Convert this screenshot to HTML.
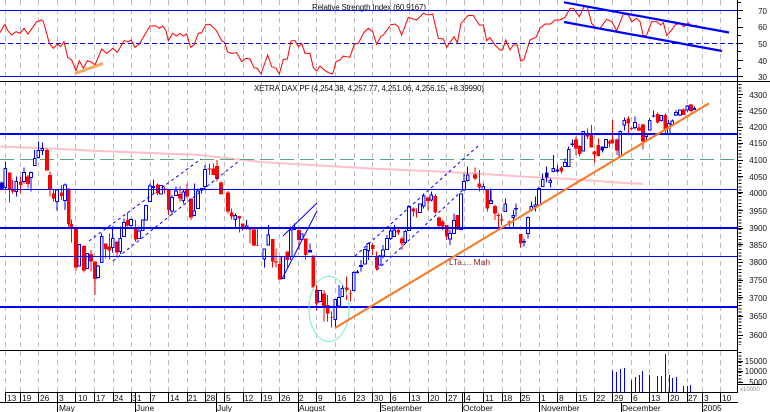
<!DOCTYPE html>
<html>
<head>
<meta charset="utf-8">
<style>
html,body{margin:0;padding:0;background:#fff;width:770px;height:412px;overflow:hidden}
svg{display:block}
text{font-family:"Liberation Sans",sans-serif;font-size:8px;fill:#111}
.a{font-size:8px;text-anchor:end}
.d{font-size:8.4px}
</style>
</head>
<body>
<svg width="770" height="412" viewBox="0 0 770 412" xmlns="http://www.w3.org/2000/svg">
<rect width="770" height="412" fill="#fff"/>
<!-- grid -->
<path fill="none" stroke="#bdbdbd" stroke-width="1" stroke-dasharray="5 4" shape-rendering="crispEdges" d="M5.5 0V392M20.5 0V392M38.5 0V392M57.5 0V392M75.5 0V392M94.5 0V392M113.5 0V392M131.5 0V392M150.5 0V392M168.5 0V392M187.5 0V392M205.5 0V392M224.5 0V392M243.5 0V392M261.5 0V392M279.5 0V392M298.5 0V392M316.5 0V392M335.5 0V392M354.5 0V392M372.5 0V392M390.5 0V392M409.5 0V392M428.5 0V392M446.5 0V392M464.5 0V392M483.5 0V392M502.5 0V392M520.5 0V392M539.5 0V392M557.5 0V392M576.5 0V392M594.5 0V392M612.5 0V392M631.5 0V392M649.5 0V392M668.5 0V392M687.5 0V392M702.5 0V392M720.5 0V392"/>
<!-- pink and green -->
<path fill="none" stroke="#ffc0cb" stroke-width="2" d="M0 146.5L50 148.5L100 151L150 153L200 155L260 162L380 169L450 172L510 175.7L530 177L570 179L610 182L643 184"/>
<line x1="0" y1="159.5" x2="737" y2="159.5" stroke="#5aa67c" stroke-width="1" stroke-dasharray="14 6" shape-rendering="crispEdges"/>
<!-- RSI horizontals -->
<g shape-rendering="crispEdges" fill="none" stroke="#0000ff">
<line x1="0" x2="737" y1="10.5" y2="10.5"/>
<line x1="0" x2="737" y1="43.5" y2="43.5" stroke-dasharray="5 3"/>
<line x1="0" x2="737" y1="76.5" y2="76.5"/>
</g>
<!-- RSI -->
<path transform="scale(.33333)" fill="none" stroke="#ff0000" stroke-width="3" d="M0 98L10 80L15 73L22 90L35 105L48 95L60 100L72 85L84 102L98 82L110 65L125 60L130 65L140 100L148 130L160 145L172 132L182 140L192 125L203 172L215 180L228 212L238 182L250 205L262 182L275 187L285 195L305 147L320 160L338 145L352 157L372 122L385 125L393 120L405 142L418 132L450 78L468 78L478 85L488 78L497 90L505 122L518 100L530 108L540 100L550 108L560 102L572 142L582 135L595 100L605 98L618 73L630 73L648 90L665 122L675 128L682 155L695 160L710 158L725 185L738 175L750 177L762 203L772 205L783 222L803 165L815 200L828 205L838 222L850 178L862 177L873 123L885 122L895 140L905 130L915 160L930 160L940 203L950 213L960 198L970 208L985 218L998 222L1008 185L1020 180L1030 168L1050 172L1063 132L1075 130L1092 97L1105 85L1118 95L1130 133L1142 110L1150 105L1170 78"/>
<path transform="translate(380,0) scale(.33333)" fill="none" stroke="#ff0000" stroke-width="3" d="M30 75L45 72L55 80L65 105L85 52L110 60L130 40L145 45L158 42L175 115L190 117L200 142L222 110L232 128L243 70L265 46L280 47L298 75L310 75L320 122L330 113L345 135L360 150L368 150L377 120L390 150L400 135L412 135L422 183L432 178L450 120L468 112L480 85L495 72L512 72L525 60L540 60L555 52L570 25L580 25L598 50L612 20L622 20L635 70L648 85L660 85L680 58L695 65L710 92L730 42L745 45L755 65L770 55L780 65L790 108L800 105L815 65L830 65L842 75L850 68L860 107L875 90L885 75L900 70L912 80L925 68L935 80L950 75"/>
<line x1="75" y1="73.5" x2="103" y2="63.5" stroke="#f5a860" stroke-width="3"/>
<g stroke="#0000ff" stroke-width="2.2" fill="none">
<line x1="564" y1="2.3" x2="729" y2="32.5"/>
<line x1="564" y1="22" x2="722" y2="51"/>
</g>

<!-- Candles segment 1 -->
<g transform="translate(0,130) scale(.33333)" fill="none" shape-rendering="crispEdges">
<path stroke="#ff0000" stroke-width="3" d="M29 128V218M38 150V190M62 140V190M84 135V175M141 55V122M150 125V200M161 178V215M185 165V210M206 175V290M214 268V338M228 295V422M252 345V428M273 360V425M285 395V495M317 340V385M328 310V388M351 335V382M383 248V290M407 270V335M473 160V195M494 170V190M506 180V255M540 170V215M561 160V205M573 205V270M628 100V135M640 100V135M651 90V155M663 155V195M684 183V250M695 235V268M718 258V308M728 280V302M750 295V340"/>
<path stroke="#0000ff" stroke-width="3" d="M5 155V180M16 95V180M49 140V200M72 112V160M93 125V185M104 60V107M115 35V85M127 38V75M171 180V242M195 160V240M238 343V408M262 370V416M294 405V445M305 310V398M338 290V368M361 290V372M372 265V320M393 265V290M417 290V325M428 270V303M438 225V272M450 160V215M460 148V190M483 165V192M516 195V255M528 170V198M550 180V220M583 160V258M594 175V237M605 175V190M615 105V180M706 250V292M740 270V298"/>
<path stroke="#ff0000" stroke-width="11" d="M29 128V180M38 180V185M62 155V165M84 140V162M141 60V122M150 135V178M161 190V205M185 187V198M206 175V282M214 282V295M228 295V413M252 348V422M273 372V395M285 395V447M317 340V357M328 350V362M351 335V368M383 270V287M407 292V328M473 163V190M494 175V178M506 180V240M540 192V205M561 180V200M573 205V262M628 116V119M640 115V135M651 108V147M663 157V192M684 187V245M695 247V260M718 258V265M728 280V297M750 295V298"/>
<path stroke="#0000cc" stroke-width="11" d="M5 157V178"/>
<path stroke="#0000ff" stroke-width="3" fill="#fff" d="M12 115h8V172h-8zM45 155h8V185h-8zM68 127h8V155h-8zM89 127h8V143h-8zM100 85h8V107h-8zM111 62h8V83h-8zM123 55h8V62h-8zM167 180h8V215h-8zM191 165h8V212h-8zM234 343h8V408h-8zM258 370h8V416h-8zM290 408h8V443h-8zM301 320h8V398h-8zM334 325h8V352h-8zM357 325h8V365h-8zM368 277h8V320h-8zM389 268h8V287h-8zM413 303h8V325h-8zM424 270h8V302h-8zM434 226h8V270h-8zM446 168h8V215h-8zM456 170h8V172h-8zM479 167h8V192h-8zM512 202h8V243h-8zM524 183h8V197h-8zM546 186h8V212h-8zM579 243h8V257h-8zM590 183h8V235h-8zM601 175h8V180h-8zM611 118h8V170h-8zM702 256h8V268h-8zM736 288h8V295h-8z"/>
</g>

<!-- Candles segment 2 -->
<g transform="translate(250,180) scale(.33333)" fill="none" shape-rendering="crispEdges">
<path stroke="#ff0000" stroke-width="3" d="M12 145V198M22 145V197M68 177V262M78 205V262M90 230V298M112 215V262M147 148V210M167 175V238M190 226V322M200 315V392M222 330V425M233 345V425M245 395V442M290 290V360M301 330V365M368 190V225M380 215V272M445 145V165M456 170V210M490 83V110M500 85V112M534 50V90M556 42V100M567 110V145M578 120V150M590 135V180M622 105V150M712 28V95M735 75V120M745 100V145M755 100V135M778 122V145"/>
<path stroke="#0000ff" stroke-width="3" d="M43 207V262M55 135V195M99 230V297M122 140V240M133 130V150M155 160V178M180 190V218M210 330V368M256 358V445M267 315V378M277 315V350M311 275V332M322 270V280M333 240V275M345 205V252M355 188V240M389 225V255M399 195V235M411 165V210M422 145V180M433 135V170M466 150V190M477 75V152M510 70V98M521 40V85M544 35V65M600 150V195M612 100V160M633 40V148M722 25V72M766 55V95"/>
<path stroke="#ff0000" stroke-width="11" d="M12 148V197M22 196V198M68 177V245M78 245V248M90 252V298M112 215V240M147 150V180M167 175V225M190 226V322M200 328V370M222 340V378M233 375V400M245 412V414M290 322V330M301 339V341M368 195V207M380 228V265M445 150V158M456 175V190M490 85V95M500 97V99M534 52V63M556 48V98M567 113V138M578 125V140M590 135V170M622 105V148M712 28V85M735 78V100M745 105V108M755 119V121M778 125V127"/>
<path stroke="#0000cc" stroke-width="11" d="M180 210V218"/>
<path stroke="#0000ff" stroke-width="3" fill="#fff" d="M39 207h8V237h-8zM51 165h8V195h-8zM95 230h8V296h-8zM118 150h8V230h-8zM129 146h8V149h-8zM151 162h8V178h-8zM206 332h8V365h-8zM252 358h8V418h-8zM263 352h8V378h-8zM273 325h8V350h-8zM307 277h8V332h-8zM318 276h8V278h-8zM329 257h8V259h-8zM341 208h8V252h-8zM351 190h8V212h-8zM385 228h8V255h-8zM395 210h8V228h-8zM407 175h8V208h-8zM418 153h8V175h-8zM429 150h8V170h-8zM462 155h8V188h-8zM473 80h8V152h-8zM506 72h8V98h-8zM517 48h8V78h-8zM540 45h8V60h-8zM596 160h8V177h-8zM608 122h8V160h-8zM629 42h8V148h-8zM718 62h8V70h-8zM762 72h8V95h-8z"/>
</g>

<!-- Candles segment 3 (October top) -->
<g transform="translate(450,135) scale(.33333)" fill="none" shape-rendering="crispEdges">
<path stroke="#ff0000" stroke-width="3" d="M75 98V135M88 105V170"/>
<path stroke="#0000ff" stroke-width="3" d="M42 115V165M53 95V140M100 145V165M123 160V205"/>
<path stroke="#ff0000" stroke-width="11" d="M75 118V130M88 145V158"/>
<path stroke="#ffc0c0" stroke-width="3" d="M68 112H85"/>
<path stroke="#0000ff" stroke-width="3" fill="#fff" d="M38 140h8V165h-8zM49 120h8V137h-8zM96 155h8V163h-8zM119 198h8V205h-8z"/>
</g>

<!-- Candles segment 4 -->
<g transform="translate(510,90) scale(.33333)" fill="none" shape-rendering="crispEdges">
<path stroke="#ff0000" stroke-width="3" d="M32 432V472M154 228V250M198 140V195M209 165V200M232 115V147M244 105V172M253 182V218M265 145V200M298 150V172M307 90V160M321 145V195M355 80V130M365 112V120M387 100V125M399 100V178M443 68V100M466 70V130M521 55V75M543 42V68"/>
<path stroke="#0000ff" stroke-width="3" d="M10 360V415M18 340V380M42 445V470M54 380V445M64 335V365M76 320V365M87 290V345M98 250V290M110 230V278M121 265V292M130 195V245M142 225V248M165 205V230M176 170V230M187 148V170M220 125V185M277 170V188M288 148V175M331 122V200M343 82V122M375 80V118M409 130V148M419 85V122M431 62V82M454 75V95M476 90V130M487 88V105M498 60V78M510 58V78M532 45V65M553 50V60"/>
<path stroke="#ff0000" stroke-width="11" d="M32 432V460M154 232V245M198 148V175M209 168V192M232 135V140M244 135V172M253 185V193M265 165V198M298 155V160M307 148V160M321 148V182M355 85V100M365 114V117M387 112V122M399 103V155M443 72V98M466 75V120M521 58V75M543 43V63"/>
<path stroke="#0000cc" stroke-width="11" d="M110 247V262M142 238V244M187 160V165M277 170V182M431 76V80"/>
<path stroke="#0000ff" stroke-width="3" fill="#fff" d="M6 377h8V382h-8zM14 355h8V357h-8zM38 454h8V456h-8zM50 382h8V430h-8zM60 350h8V360h-8zM72 345h8V350h-8zM83 295h8V345h-8zM94 268h8V290h-8zM117 272h8V277h-8zM126 235h8V245h-8zM161 217h8V230h-8zM172 178h8V230h-8zM216 125h8V183h-8zM284 148h8V172h-8zM327 125h8V200h-8zM339 92h8V105h-8zM371 97h8V113h-8zM405 130h8V140h-8zM415 92h8V120h-8zM450 77h8V92h-8zM472 100h8V130h-8zM483 93h8V103h-8zM494 68h8V75h-8zM506 60h8V75h-8zM528 48h8V60h-8zM549 56h8V58h-8z"/>
</g>

<!-- main horizontals -->
<g shape-rendering="crispEdges" stroke="#0000ff">
<line x1="0" x2="737" y1="134" y2="134" stroke-width="2"/>
<line x1="0" x2="737" y1="189.5" y2="189.5" stroke-width="1"/>
<line x1="0" x2="737" y1="228" y2="228" stroke-width="2"/>
<line x1="0" x2="737" y1="256.5" y2="256.5" stroke-width="1"/>
<line x1="0" x2="737" y1="307" y2="307" stroke-width="2"/>
</g>

<!-- channels -->
<g fill="none" stroke="#0000ff" stroke-width="1">
<line x1="89" y1="241" x2="201" y2="159" stroke-dasharray="3 3"/>
<line x1="113" y1="261" x2="239" y2="161" stroke-dasharray="3 3"/>
<line x1="355" y1="256" x2="478" y2="146" stroke-dasharray="3 3"/>
<line x1="377" y1="270" x2="465" y2="188" stroke-dasharray="3 3"/>
<line x1="283" y1="236" x2="317" y2="203"/>
<line x1="282" y1="279" x2="317" y2="211"/>
</g>
<ellipse cx="329" cy="309" rx="20" ry="32.7" fill="none" stroke="#7feccf" stroke-width="1"/>
<line x1="335" y1="328" x2="709" y2="103.3" stroke="#f97a28" stroke-width="2.1"/>
<text x="449" y="265" textLength="41" lengthAdjust="spacing" style="fill:#8b1a1a;font-size:8.4px">LTa.... Mah</text>

<!-- separators -->
<g shape-rendering="crispEdges" stroke="#000" stroke-width="1">
<line x1="0" x2="770" y1="81.5" y2="81.5"/>
<line x1="0" x2="738" y1="350.5" y2="350.5"/>
<line x1="737.5" x2="737.5" y1="0" y2="392"/>
<line x1="5" x2="738" y1="392.5" y2="392.5"/>
<line x1="0" x2="738" y1="402.5" y2="402.5"/>
<line x1="738" x2="762" y1="384.5" y2="384.5"/>
<path fill="none" d="M738 10.5H743M738 27.5H743M738 43.5H743M738 60.5H743M738 76.5H743M738 2.5H741M738 18.5H741M738 35.5H741M738 51.5H741M738 68.5H741M738 94.5H743M738 111.5H743M738 127.5H743M738 143.5H743M738 160.5H743M738 176.5H743M738 192.5H743M738 210.5H743M738 228.5H743M738 244.5H743M738 262.5H743M738 280.5H743M738 297.5H743M738 316.5H743M738 335.5H743M738 361.5H743M738 371.5H743M738 382.5H743"/>
<line x1="740" x2="740" y1="84" y2="345" stroke-width="3" stroke-dasharray="1 2.3"/>
<line x1="740" x2="740" y1="352" y2="384" stroke-width="3" stroke-dasharray="1 2.3"/>
<path fill="none" d="M5.5 392V403M20.5 392V403M38.5 392V403M57.5 392V403M75.5 392V403M94.5 392V403M113.5 392V403M131.5 392V403M135.5 392V403M150.5 392V403M168.5 392V403M187.5 392V403M205.5 392V403M216.5 392V403M224.5 392V403M243.5 392V403M261.5 392V403M279.5 392V403M298.5 392V403M316.5 392V403M335.5 392V403M354.5 392V403M372.5 392V403M390.5 392V403M409.5 392V403M428.5 392V403M446.5 392V403M462.5 392V403M464.5 392V403M483.5 392V403M502.5 392V403M520.5 392V403M539.5 392V403M557.5 392V403M576.5 392V403M594.5 392V403M612.5 392V403M631.5 392V403M649.5 392V403M668.5 392V403M687.5 392V403M702.5 392V403M720.5 392V403M57.5 403V412M135.5 403V412M216.5 403V412M298.5 403V412M380.5 403V412M462.5 403V412M539.5 403V412M621.5 403V412M702.5 403V412"/>
</g>

<!-- volume -->
<path transform="translate(380,340) scale(.33333)" fill="none" stroke="#0000ff" stroke-width="3" shape-rendering="crispEdges" d="M697 92V157M709 96V157M721 87V157M733 84V157M755 120V157M767 111V157M778 105V157M787 93V157M808 105V157M832 108V157M844 108V157M856 42V157M868 105V157M877 114V157M889 111V157M910 138V157M922 138V157M931 135V157"/>

<!-- titles -->
<text x="312" y="10" textLength="114" lengthAdjust="spacing">Relative Strength Index (60,9167)</text>
<text x="254" y="91" textLength="230" lengthAdjust="spacing">XETRA DAX PF (4,254.38, 4,257.77, 4,251.06, 4,256.15, +8.39990)</text>

<!-- axis labels -->
<g class="axis">
<text class="a" x="767" y="14">70</text><text class="a" x="767" y="30">60</text><text class="a" x="767" y="47">50</text><text class="a" x="767" y="64">40</text><text class="a" x="767" y="80">30</text>
<text class="a" x="767" y="98">4300</text><text class="a" x="767" y="114">4250</text><text class="a" x="767" y="130">4200</text><text class="a" x="767" y="146">4150</text><text class="a" x="767" y="163">4100</text><text class="a" x="767" y="180">4050</text><text class="a" x="767" y="196">4000</text><text class="a" x="767" y="214">3950</text><text class="a" x="767" y="231">3900</text><text class="a" x="767" y="248">3850</text><text class="a" x="767" y="265">3800</text><text class="a" x="767" y="283">3750</text><text class="a" x="767" y="301">3700</text><text class="a" x="767" y="319">3650</text><text class="a" x="767" y="338">3600</text>
<text class="a" x="767" y="364">15000</text><text class="a" x="767" y="374">10000</text><text class="a" x="767" y="385">5000</text>
<text x="740" y="391" style="font-size:6px;fill:#888">x10000</text>
</g>

<!-- dates -->
<g>
<text class="d" x="7" y="401">13</text><text class="d" x="22" y="401">19</text><text class="d" x="40" y="401">26</text><text class="d" x="59" y="401">3</text><text class="d" x="78" y="401">10</text><text class="d" x="96" y="401">17</text><text class="d" x="114" y="401">24</text><text class="d" x="132" y="401">3</text><text class="d" x="137" y="401">1</text><text class="d" x="151" y="401">7</text><text class="d" x="170" y="401">14</text><text class="d" x="188" y="401">21</text><text class="d" x="206" y="401">28</text><text class="d" x="226" y="401">5</text><text class="d" x="244" y="401">12</text><text class="d" x="263" y="401">19</text><text class="d" x="281" y="401">26</text><text class="d" x="299" y="401">2</text><text class="d" x="318" y="401">9</text><text class="d" x="337" y="401">16</text><text class="d" x="356" y="401">23</text><text class="d" x="374" y="401">30</text><text class="d" x="392" y="401">6</text><text class="d" x="411" y="401">13</text><text class="d" x="430" y="401">20</text><text class="d" x="448" y="401">27</text><text class="d" x="466" y="401">4</text><text class="d" x="485" y="401">11</text><text class="d" x="503" y="401">18</text><text class="d" x="521" y="401">25</text><text class="d" x="541" y="401">1</text><text class="d" x="559" y="401">8</text><text class="d" x="578" y="401">15</text><text class="d" x="596" y="401">22</text><text class="d" x="614" y="401">29</text><text class="d" x="633" y="401">6</text><text class="d" x="651" y="401">13</text><text class="d" x="670" y="401">20</text><text class="d" x="688" y="401">27</text><text class="d" x="704" y="401">3</text><text class="d" x="722" y="401">10</text>
<text class="d" x="59" y="411">May</text><text class="d" x="136" y="411">June</text><text class="d" x="217" y="411">July</text><text class="d" x="299" y="411">August</text><text class="d" x="381" y="411">September</text><text class="d" x="463" y="411">October</text><text class="d" x="541" y="411">November</text><text class="d" x="622" y="411">December</text><text class="d" x="703" y="411">2005</text>
</g>
</svg>
</body>
</html>
